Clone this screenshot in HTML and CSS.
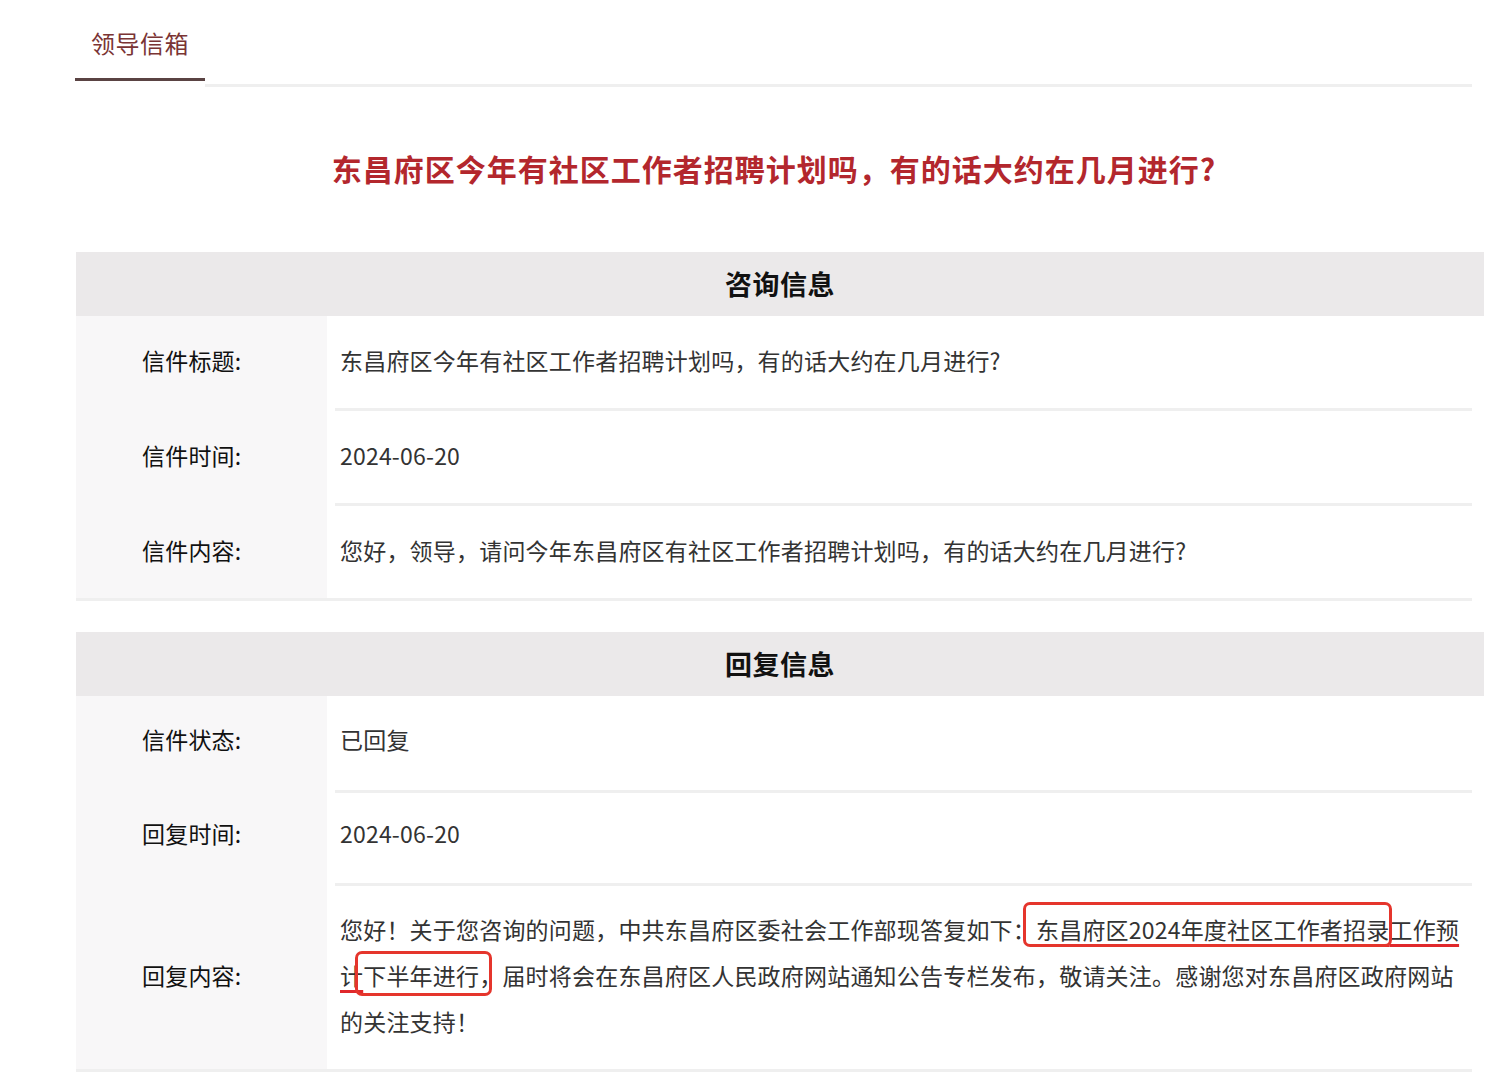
FILE: index.html
```html
<!DOCTYPE html>
<html lang="zh-CN">
<head>
<meta charset="utf-8">
<title>领导信箱</title>
<link rel="stylesheet" href="styles.css">
</head>
<body>
<div class="page">
  <div class="tabbar">
    <div class="tab">领导信箱</div>
    <div class="tabfill"></div>
  </div>

  <h1 class="title">东昌府区今年有社区工作者招聘计划吗，有的话大约在几月进行?</h1>

  <section class="panel">
    <div class="panel-head">咨询信息</div>
    <div class="panel-body">
      <div class="row">
        <div class="label">信件标题:</div>
        <div class="value"><div class="value-in">东昌府区今年有社区工作者招聘计划吗，有的话大约在几月进行?</div></div>
      </div>
      <div class="row">
        <div class="label">信件时间:</div>
        <div class="value"><div class="value-in">2024-06-20</div></div>
      </div>
      <div class="row last">
        <div class="label">信件内容:</div>
        <div class="value"><div class="value-in">您好，领导，请问今年东昌府区有社区工作者招聘计划吗，有的话大约在几月进行?</div></div>
      </div>
    </div>
  </section>

  <section class="panel">
    <div class="panel-head">回复信息</div>
    <div class="panel-body">
      <div class="row row-status">
        <div class="label">信件状态:</div>
        <div class="value"><div class="value-in">已回复</div></div>
      </div>
      <div class="row row-time">
        <div class="label">回复时间:</div>
        <div class="value"><div class="value-in">2024-06-20</div></div>
      </div>
      <div class="row last">
        <div class="label">回复内容:</div>
        <div class="value"><div class="value-in reply">您好！关于您咨询的问题，中共东昌府区委社会工作部现答复如下：<span class="mark-line"><span class="mark-box mb1">东昌府区2024年度社区工作者招录</span>工作预计</span><span class="mark-box mb2">下半年进行，</span>届时将会在东昌府区人民政府网站通知公告专栏发布，敬请关注。感谢您对东昌府区政府网站的关注支持！</div></div>
      </div>
    </div>
  </section>
</div>
</body>
</html>
```

FILE: styles.css
```css
html, body {
  margin: 0;
  padding: 0;
  background: #ffffff;
}

body {
  font-family: "Noto Sans CJK SC", "Noto Sans", sans-serif;
  color: #333333;
}

.page {
  margin-left: 76px;
  width: 1396px;
}

/* tab bar */
.tabbar {
  display: flex;
  align-items: flex-end;
  margin-left: -1px;
}

.tab {
  padding: 26px 16px 18px 16px;
  font-size: 24px;
  line-height: 34px;
  letter-spacing: 0.5px;
  color: #7a3434;
  border-bottom: 3px solid #5a4343;
  margin-bottom: 6px;
}

.tabfill {
  flex: 1;
  border-bottom: 3px solid #efefef;
}

/* title */
.title {
  margin: 61px 0 64px 0;
  text-align: center;
  font-size: 30px;
  line-height: 40px;
  letter-spacing: 1px;
  font-weight: 700;
  color: #b3272d;
}

/* panels */
.panel {
  margin-bottom: 31px;
}

.panel-head {
  margin-right: -12px;
  height: 64px;
  line-height: 64px;
  text-align: center;
  background: #ebe9ea;
  font-size: 27px;
  font-weight: 700;
  color: #111111;
  letter-spacing: 0.5px;
}

.panel-body {
  border-bottom: 3px solid #efefef;
}

.row {
  display: grid;
  grid-template-columns: 251px 1fr;
}

.label {
  background: #f8f7f8;
  padding-left: 66px;
  padding-bottom: 7px;
  display: flex;
  align-items: center;
  font-size: 23px;
  letter-spacing: 0.2px;
  color: #111111;
}

.value {
  background: #ffffff;
}

.value-in {
  box-sizing: border-box;
  margin-left: 8px;
  padding: 0 2px 4px 5px;
  min-height: 95px;
  display: flex;
  align-items: center;
  font-size: 23px;
  letter-spacing: 0.2px;
  color: #333333;
  border-bottom: 3px solid #efefef;
}

.row.last .value-in {
  border-bottom: none;
  min-height: 92px;
}

.row.last .label {
  padding-bottom: 5px;
}

.row-status .value-in {
  min-height: 97px;
  padding-bottom: 8px;
}

.row-status .label {
  padding-bottom: 11px;
}

.row-time .value-in {
  min-height: 93px;
  padding-bottom: 10px;
}

.row-time .label {
  padding-bottom: 13px;
}

.value-in.reply {
  display: block;
  min-height: 0;
  padding-top: 20px;
  padding-bottom: 25px;
  line-height: 46px;
}

/* annotations */
.mark-line {
  text-decoration: underline;
  text-decoration-color: #e0282b;
  text-decoration-thickness: 3px;
  text-underline-offset: 5px;
}

.mark-box {
  position: relative;
}

.mark-box::after {
  content: "";
  position: absolute;
  border: 3px solid #e5352c;
  border-radius: 7px;
  pointer-events: none;
}

.mb1::after {
  top: -10px;
  bottom: -1px;
  left: -13px;
  right: -3px;
}

.mb2::after {
  top: -7px;
  bottom: -4px;
  left: -8px;
  right: 10px;
}
```
